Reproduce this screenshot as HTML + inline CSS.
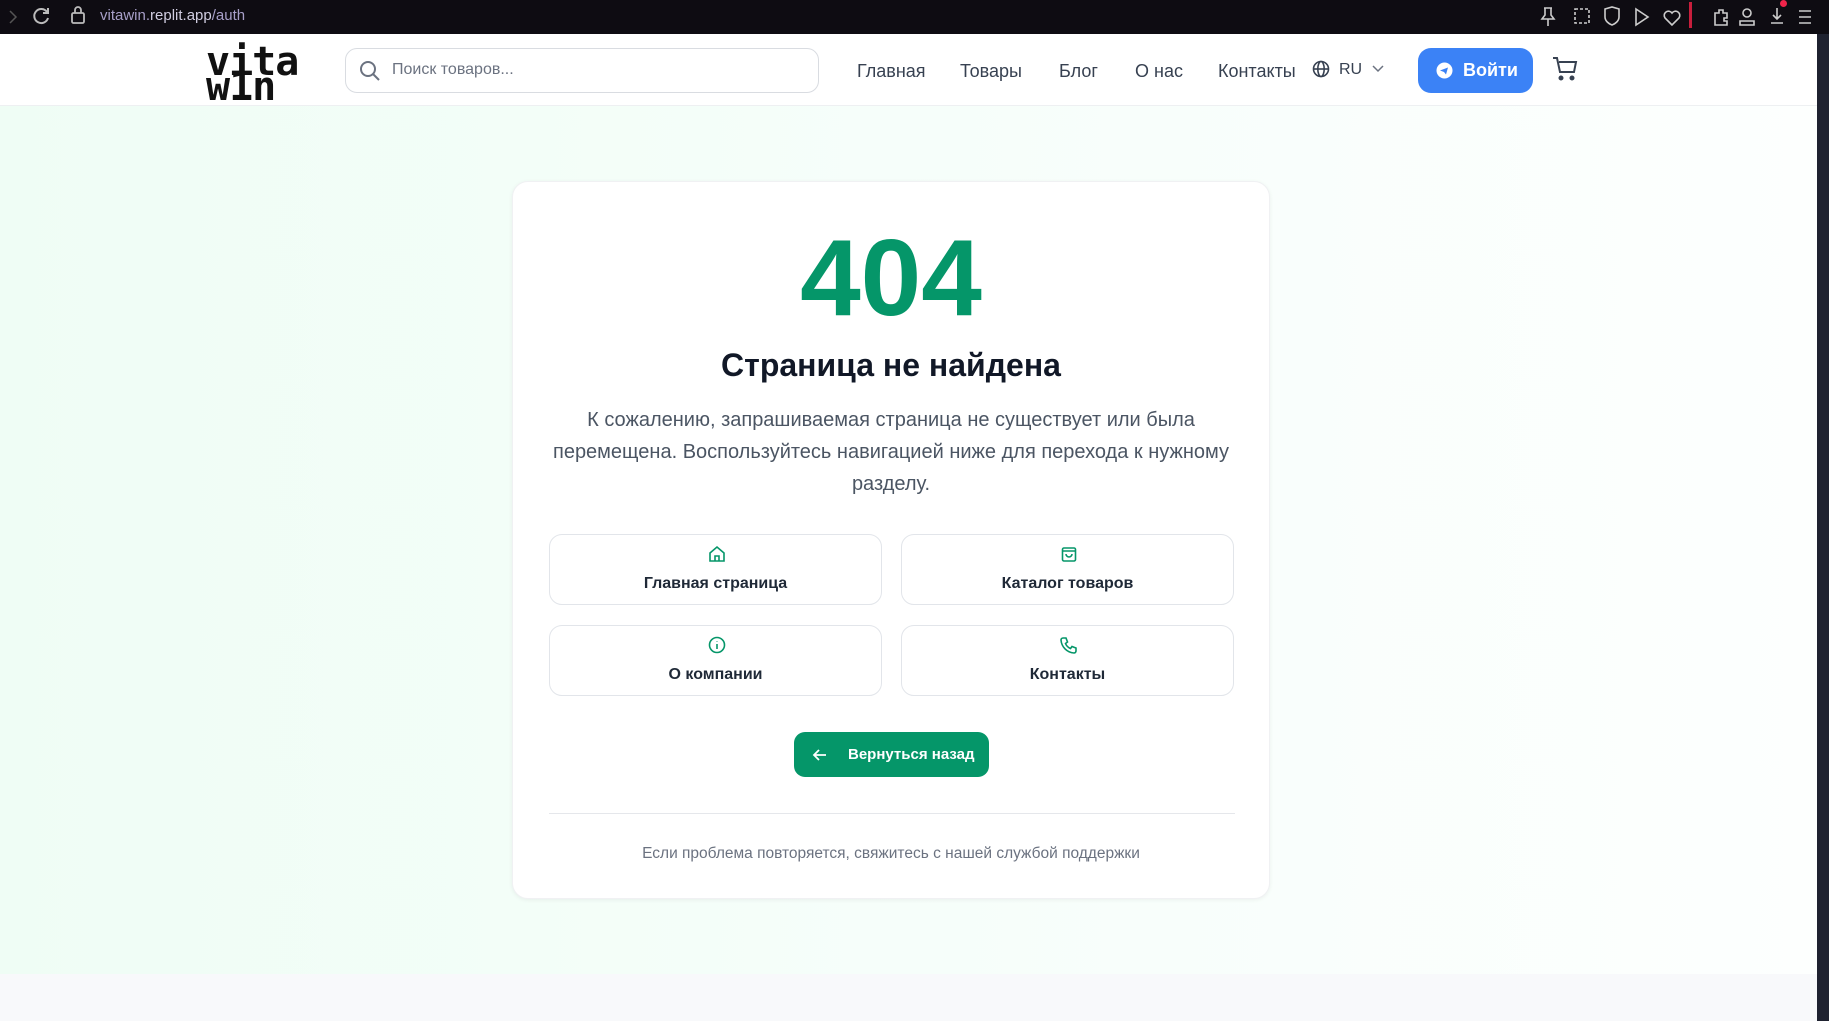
<!DOCTYPE html>
<html><head><meta charset="utf-8"><style>
*{margin:0;padding:0;box-sizing:border-box}
body{width:1829px;height:1021px;overflow:hidden;font-family:"Liberation Sans","DejaVu Sans",sans-serif;background:#f8f9fb;position:relative}
.bar{position:absolute;left:0;top:0;width:1829px;height:34px;background:#0e0c12}
.url{position:absolute;left:100px;top:7px;color:#a79fc8;font-size:15px}
.url b{font-weight:normal;color:#d0cde0}
.hdr{position:absolute;left:0;top:34px;width:1817px;height:72px;background:#fff;border-bottom:1px solid #eef0f2;overflow:hidden}
.main{position:absolute;left:0;top:106px;width:1817px;height:868px;background:linear-gradient(90deg,#effdf5 0%,#f6fefa 50%,#fdfffe 100%)}
.sb{position:absolute;left:1817px;top:34px;width:12px;height:987px;background:#1f2230}
.logo{position:absolute;left:206px;top:16px;font-family:"DejaVu Sans Mono","Liberation Mono",monospace;font-weight:bold;font-size:40px;line-height:25px;color:#111;letter-spacing:-1px}
.search{position:absolute;left:345px;top:14px;width:474px;height:45px;border:1px solid #d9dce1;border-radius:12px;background:#fff}
.search span{position:absolute;left:46px;top:12px;font-size:16px;color:#6b7280}
.nav{position:absolute;font-size:18px;color:#374151}
.btn{position:absolute;left:1418px;top:14px;width:115px;height:45px;background:#3b82f6;border-radius:13px;color:#fff;font-weight:bold;font-size:18px}
.card{position:absolute;left:512px;top:181px;width:758px;height:718px;background:#fff;border-radius:16px;box-shadow:0 1px 4px rgba(0,0,0,.06);border:1px solid #f0f1f3}
.c{position:absolute;left:0;width:100%;text-align:center}
.tile{position:absolute;width:333px;height:71px;border:1px solid #e2e5ea;border-radius:13px;background:#fff;text-align:center}
.tile svg{position:absolute;left:158px;top:10px}
.tile div{position:absolute;top:40px;width:100%;font-size:16px;font-weight:bold;color:#1f2937}
</style></head><body>
<div class="bar">
<svg style="position:absolute;left:6px;top:9px" width="14" height="16"><path d="M4 2l6 6-6 6" stroke="#555" stroke-width="1.5" fill="none"/></svg>
<svg style="position:absolute;left:32px;top:6px" width="20" height="20"><path d="M15 6a7 7 0 1 0 1 6" stroke="#bbb" stroke-width="2" fill="none"/><path d="M16 2v5h-5" stroke="#bbb" stroke-width="2" fill="none"/></svg>
<svg style="position:absolute;left:70px;top:5px" width="16" height="20"><rect x="2" y="8" width="12" height="10" rx="1.5" stroke="#bbb" stroke-width="1.8" fill="none"/><path d="M5 8V5a3 3 0 0 1 6 0v3" stroke="#bbb" stroke-width="1.8" fill="none"/></svg>
<div class="url">vitawin.<b>replit.app</b>/auth</div>
<svg style="position:absolute;left:1535px;top:5px" width="280" height="24" fill="none" stroke="#ccc" stroke-width="1.6">
<path d="M9 3h8M10 3v7l-3 4h12l-3-4V3M13 14v7"/><rect x="40" y="4" width="14" height="14" stroke-dasharray="3 2"/><path d="M70 4l7-2 7 2v8c0 4-4 7-7 8-3-1-7-4-7-8z"/><path d="M101 4l12 8-12 8z"/><path d="M137 20l-7-7a4 4 0 0 1 7-5 4 4 0 0 1 7 5z"/><path d="M180 8h4v-3h4v3h4v5h-3v3h3v4h-12z"/><circle cx="212" cy="8" r="4"/><path d="M205 20v-4h14v4z"/><path d="M242 3v11m-4-4l4 4 4-4M236 18h12"/><path d="M264 6h12M264 12h12M264 18h12"/>
</svg>
<div style="position:absolute;left:1780px;top:0;width:7px;height:7px;border-radius:50%;background:#f0244a"></div>
<div style="position:absolute;left:1689px;top:2px;width:3px;height:26px;background:#c81e3c"></div>
</div>
<div class="hdr">
<div class="logo">vita<br>w1n</div>
<div class="search"><svg style="position:absolute;left:13px;top:11px" width="22" height="22" fill="none" stroke="#6b7280" stroke-width="2"><circle cx="9" cy="9" r="7"/><path d="M14 14l6 6"/></svg><span>Поиск товаров...</span></div>
<div class="nav" style="left:857px;top:27px">Главная</div>
<div class="nav" style="left:960px;top:27px">Товары</div>
<div class="nav" style="left:1059px;top:27px">Блог</div>
<div class="nav" style="left:1135px;top:27px">О нас</div>
<div class="nav" style="left:1218px;top:27px">Контакты</div>
<svg style="position:absolute;left:1312px;top:26px" width="18" height="18" fill="none" stroke="#374151" stroke-width="1.6"><circle cx="9" cy="9" r="7.5"/><ellipse cx="9" cy="9" rx="3.2" ry="7.5"/><path d="M1.5 9h15"/></svg>
<div class="nav" style="left:1339px;top:27px;font-size:16px">RU</div>
<svg style="position:absolute;left:1372px;top:30px" width="12" height="10" fill="none" stroke="#6b7280" stroke-width="1.5"><path d="M1 2l5 5 5-5"/></svg>
<div class="btn"><svg style="position:absolute;left:18px;top:14px" width="17" height="17"><circle cx="8.5" cy="8.5" r="8" fill="#fff"/><path d="M4 8.5l8-3-2 7-2-2.5z" fill="#3b82f6"/></svg><span style="position:absolute;left:45px;top:12px">Войти</span></div>
<svg style="position:absolute;left:1551px;top:21px" width="28" height="28" fill="none" stroke="#374151" stroke-width="2"><path d="M2 3h4l3 14h14l2-10H8"/><circle cx="10" cy="23" r="1.5" fill="#374151"/><circle cx="21" cy="23" r="1.5" fill="#374151"/></svg>
</div>
<div class="main"></div>
<div class="sb"></div>
<div class="card">
<div class="c" style="top:34px;font-size:109px;font-weight:bold;color:#059669;line-height:125px">404</div>
<div class="c" style="top:163px;font-size:32px;font-weight:bold;color:#111827;line-height:40px">Страница не найдена</div>
<div class="c" style="top:222px;font-size:20px;color:#4b5563;line-height:32px">К сожалению, запрашиваемая страница не существует или была<br>перемещена. Воспользуйтесь навигацией ниже для перехода к нужному<br>разделу.</div>
<div class="tile" style="left:36px;top:352px"><svg width="18" height="18" fill="none" stroke="#059669" stroke-width="1.6"><path d="M2 8l7-6 7 6v8H2z"/><path d="M7 16v-5h4v5"/></svg><div>Главная страница</div></div>
<div class="tile" style="left:388px;top:352px"><svg width="18" height="18" fill="none" stroke="#059669" stroke-width="1.6"><rect x="2.5" y="3" width="13" height="13" rx="1.5"/><path d="M2.5 6h13M6 9a3 3 0 0 0 6 0"/></svg><div>Каталог товаров</div></div>
<div class="tile" style="left:36px;top:443px"><svg width="18" height="18" fill="none" stroke="#059669" stroke-width="1.6"><circle cx="9" cy="9" r="7.5"/><path d="M9 8v5M9 5.5v.5"/></svg><div>О компании</div></div>
<div class="tile" style="left:388px;top:443px"><svg width="18" height="18" fill="none" stroke="#059669" stroke-width="1.6"><path d="M3 2h3l1.5 4-2 1.5a9 9 0 0 0 5 5l1.5-2 4 1.5v3a2 2 0 0 1-2 2A14 14 0 0 1 1 4a2 2 0 0 1 2-2z"/></svg><div>Контакты</div></div>
<div style="position:absolute;left:281px;top:550px;width:195px;height:45px;background:#059669;border-radius:11px;color:#fff;font-weight:bold;font-size:15px"><svg style="position:absolute;left:18px;top:15px" width="16" height="16" fill="none" stroke="#fff" stroke-width="1.8"><path d="M14 8H2M7 3L2 8l5 5"/></svg><span style="position:absolute;left:54px;top:14px;white-space:nowrap">Вернуться назад</span></div>
<div style="position:absolute;left:36px;top:631px;width:686px;height:1px;background:#e5e7eb"></div>
<div class="c" style="top:663px;font-size:15.5px;color:#6b7280">Если проблема повторяется, свяжитесь с нашей службой поддержки</div>
</div>
</body></html>
